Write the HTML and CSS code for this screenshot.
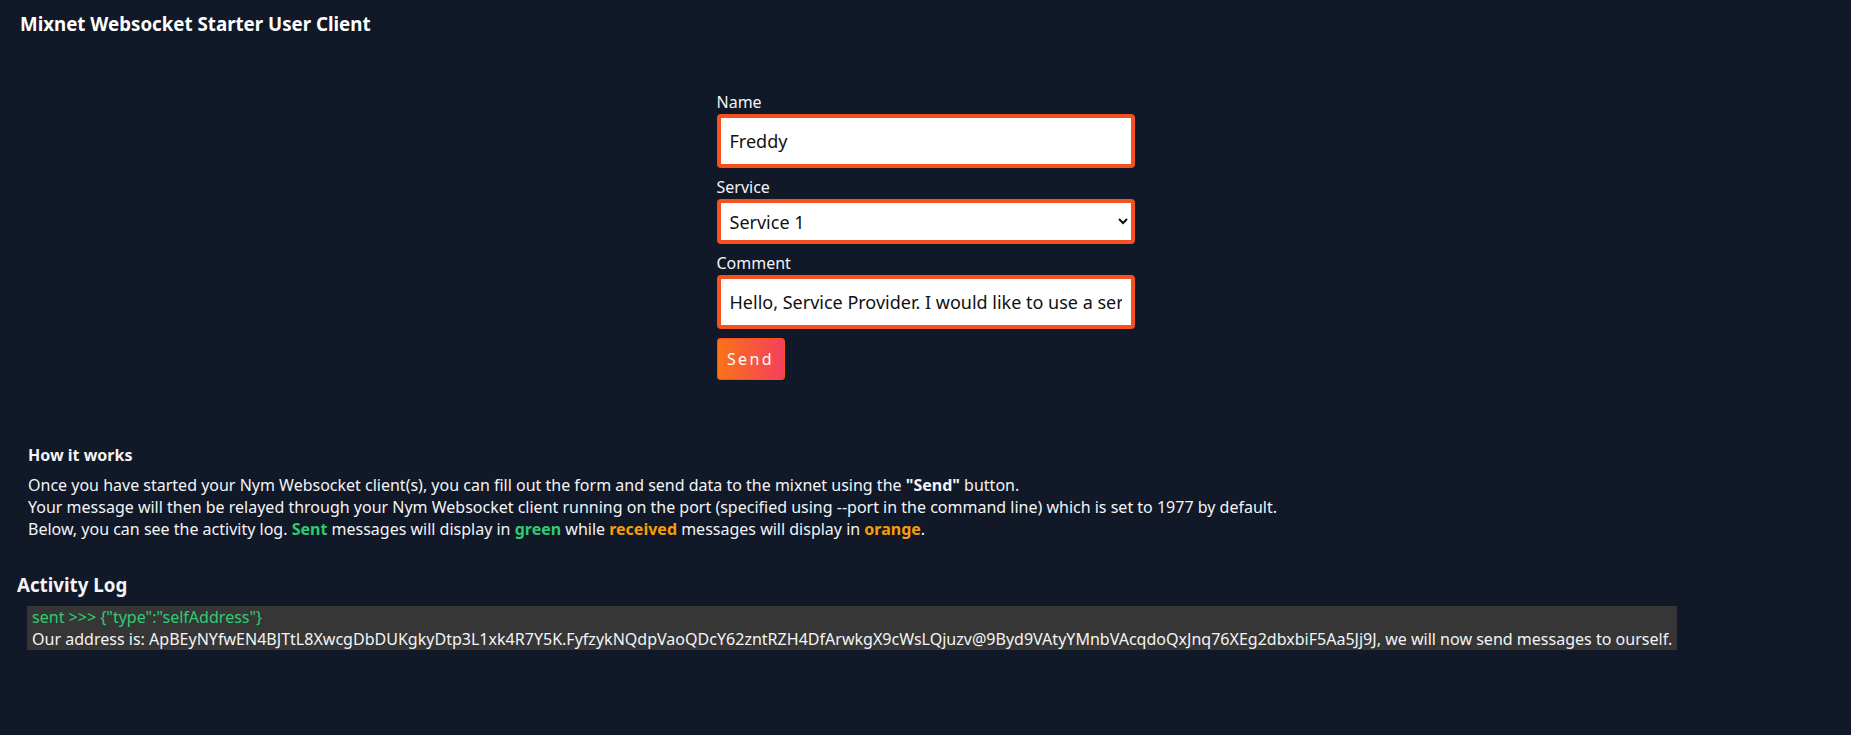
FILE: index.html
```html
<!DOCTYPE html>
<html lang="en">
<head>
<meta charset="utf-8">
<title>Mixnet Websocket Starter User Client</title>
<link rel="stylesheet" href="styles.css">
</head>
<body>
  <header class="topbar">
    <h1 class="app-title">Mixnet Websocket Starter User Client</h1>
  </header>

  <main>
    <form class="send-form" onsubmit="return false">
      <div class="field">
        <label class="field-label" for="name">Name</label>
        <input class="field-input" id="name" type="text" value="Freddy">
      </div>
      <div class="field">
        <label class="field-label" for="service">Service</label>
        <select class="field-input field-select" id="service">
          <option>Service 1</option>
          <option>Service 2</option>
          <option>Service 3</option>
        </select>
      </div>
      <div class="field">
        <label class="field-label" for="comment">Comment</label>
        <input class="field-input" id="comment" type="text" value="Hello, Service Provider. I would like to use a service.">
      </div>
      <button class="send-btn" type="submit">Send</button>
    </form>

    <section class="how">
      <h4 class="how-title">How it works</h4>
      <p class="how-text">
        Once you have started your Nym Websocket client(s), you can fill out the form and send data to the mixnet using the <b>"Send"</b> button.<br>
        Your message will then be relayed through your Nym Websocket client running on the port (specified using --port in the command line) which is set to 1977 by default.<br>
        Below, you can see the activity log. <b class="c-sent">Sent</b> messages will display in <b class="c-sent">green</b> while <b class="c-recv">received</b> messages will display in <b class="c-recv">orange</b>.
      </p>
    </section>

    <section class="log">
      <h3 class="log-title">Activity Log</h3>
      <div class="log-box">
        <div class="log-line c-sent-line">sent &gt;&gt;&gt; {"type":"selfAddress"}</div>
        <div class="log-line">Our address is: ApBEyNYfwEN4BJTtL8XwcgDbDUKgkyDtp3L1xk4R7Y5K.FyfzykNQdpVaoQDcY62zntRZH4DfArwkgX9cWsLQjuzv@9Byd9VAtyYMnbVAcqdoQxJnq76XEg2dbxbiF5Aa5Jj9J, we will now send messages to ourself.</div>
      </div>
    </section>
  </main>
</body>
</html>
```

FILE: styles.css
```css
* { box-sizing: border-box; }

html, body {
  margin: 0;
  padding: 0;
  background: #111827;
  color: #f3f4f6;
  font-family: "Noto Sans", "Open Sans", "DejaVu Sans", sans-serif;
  font-size: 16px;
}

body { min-height: 735px; }

.topbar {
  padding: 11px 20px 0;
}

.app-title {
  margin: 0;
  font-size: 18.72px;
  font-weight: 700;
  line-height: 26px;
  color: #ffffff;
}

.send-form {
  width: 418px;
  margin: 54px auto 0;
  display: flex;
  flex-direction: column;
  align-items: flex-start;
}

.field {
  width: 100%;
  display: flex;
  flex-direction: column;
  margin-bottom: 8px;
}

.field-label {
  line-height: 23px;
  color: #f3f4f6;
}

.field-input {
  width: 100%;
  height: 54px;
  border: 4px solid #f4511e;
  border-radius: 4px;
  background: #ffffff;
  color: #111111;
  font-family: "Noto Sans", "Open Sans", sans-serif;
  font-size: 18px;
  padding: 0 9px;
  outline: none;
}

.field-select {
  height: 45px;
  padding: 0 5px;
}

.send-btn {
  margin-top: 1px;
  height: 42px;
  width: 68px;
  padding: 0;
  border: 1px solid #f4511e;
  border-radius: 3px;
  background: linear-gradient(90deg, #f97316, #f43f5e);
  color: #ffffff;
  font-family: "Noto Sans", "Open Sans", sans-serif;
  font-size: 16px;
  letter-spacing: 2.4px;
  cursor: pointer;
}

.how {
  padding: 0 28px;
  margin-top: 64px;
}

.how-title {
  margin: 0;
  font-size: 16px;
  font-weight: 700;
  line-height: 22px;
}

.how-text {
  margin: 8px 0 0;
  line-height: 22px;
}

.how-text b { font-weight: 700; }

.c-sent { color: #2ecc71; }
.c-recv { color: #f59e0b; }

.log {
  padding: 0 17px;
  margin-top: 31px;
}

.log-title {
  margin: 0;
  font-size: 18.72px;
  font-weight: 700;
  line-height: 27px;
}

.log-box {
  margin: 8px 0 0 10px;
  width: fit-content;
  background: #363636;
  padding: 0 5px 0 5px;
}

.log-line {
  line-height: 22px;
  white-space: nowrap;
  color: #f3f4f6;
  font-size: 16.05px;
}

.c-sent-line { color: #2ecc71; }
```
